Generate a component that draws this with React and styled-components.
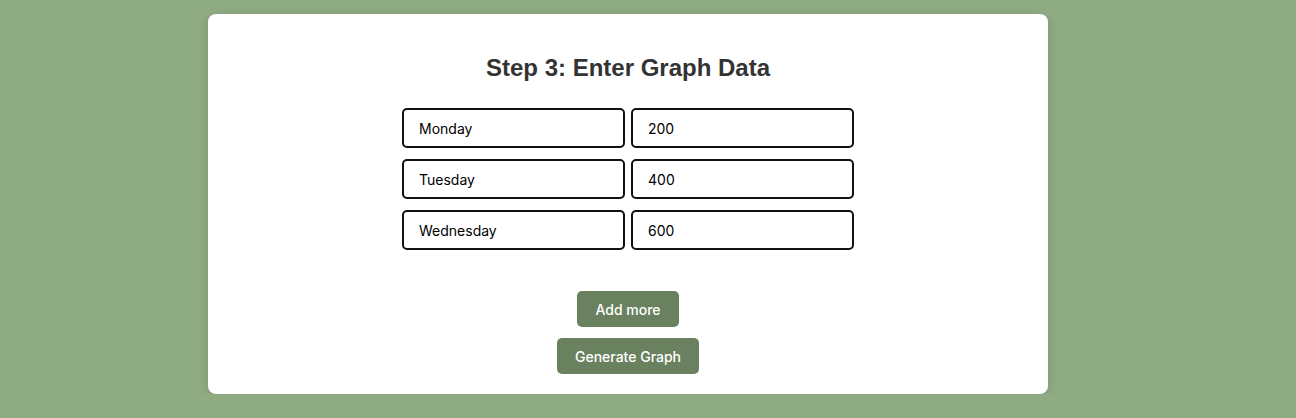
import styled, { createGlobalStyle } from "styled-components"

const GlobalStyle = createGlobalStyle`
  body {
    margin: 0;
    background: #8fab82;
    font-family: Inter, "Liberation Sans", Arial, sans-serif;
  }
`

const rows = [
  { label: "Monday", value: "200" },
  { label: "Tuesday", value: "400" },
  { label: "Wednesday", value: "600" },
]

export default function App() {
  return (
    <>
      <GlobalStyle />
      <Page>
        <Card>
          <Title>Step 3: Enter Graph Data</Title>
          <DataGrid>
            {rows.map((r) => (
              <Row key={r.label}>
                <Field defaultValue={r.label} />
                <Field defaultValue={r.value} />
              </Row>
            ))}
          </DataGrid>
          <Actions>
            <Button>Add more</Button>
            <Button>Generate Graph</Button>
          </Actions>
        </Card>
      </Page>
    </>
  )
}

const Page = styled.div`
  padding: 14px 40px 0 0;
`
const Card = styled.div`
  width: 840px;
  box-sizing: border-box;
  margin: 0 auto;
  background: #fff;
  border-radius: 8px;
  box-shadow: 0 2px 10px rgba(0, 0, 0, 0.12);
  padding: 40px 20px 20px;
  display: flex;
  flex-direction: column;
  align-items: center;
`
const Title = styled.h2`
  margin: 0 0 26px;
  font-family: "Liberation Sans", Arial, sans-serif;
  font-size: 24px;
  line-height: 28px;
  font-weight: 700;
  color: #333;
`
const DataGrid = styled.div`
  display: flex;
  flex-direction: column;
  gap: 11px;
`
const Row = styled.div`
  display: flex;
  gap: 6px;
`
const Field = styled.input`
  width: 223px;
  height: 40px;
  box-sizing: border-box;
  border: 2px solid #111;
  border-radius: 5px;
  padding: 0 15px;
  font-family: Inter, "Liberation Sans", Arial, sans-serif;
  font-size: 14px;
  color: #000;
  background: #fff;
  outline: none;
`
const Actions = styled.div`
  margin-top: 41px;
  display: flex;
  flex-direction: column;
  align-items: center;
  gap: 11px;
`
const Button = styled.button`
  height: 36px;
  padding: 0 18px;
  border: none;
  border-radius: 5px;
  background: #6a8160;
  color: #fff;
  font-family: Inter, "Liberation Sans", Arial, sans-serif;
  font-size: 14px;
  font-weight: 500;
  cursor: pointer;
`
